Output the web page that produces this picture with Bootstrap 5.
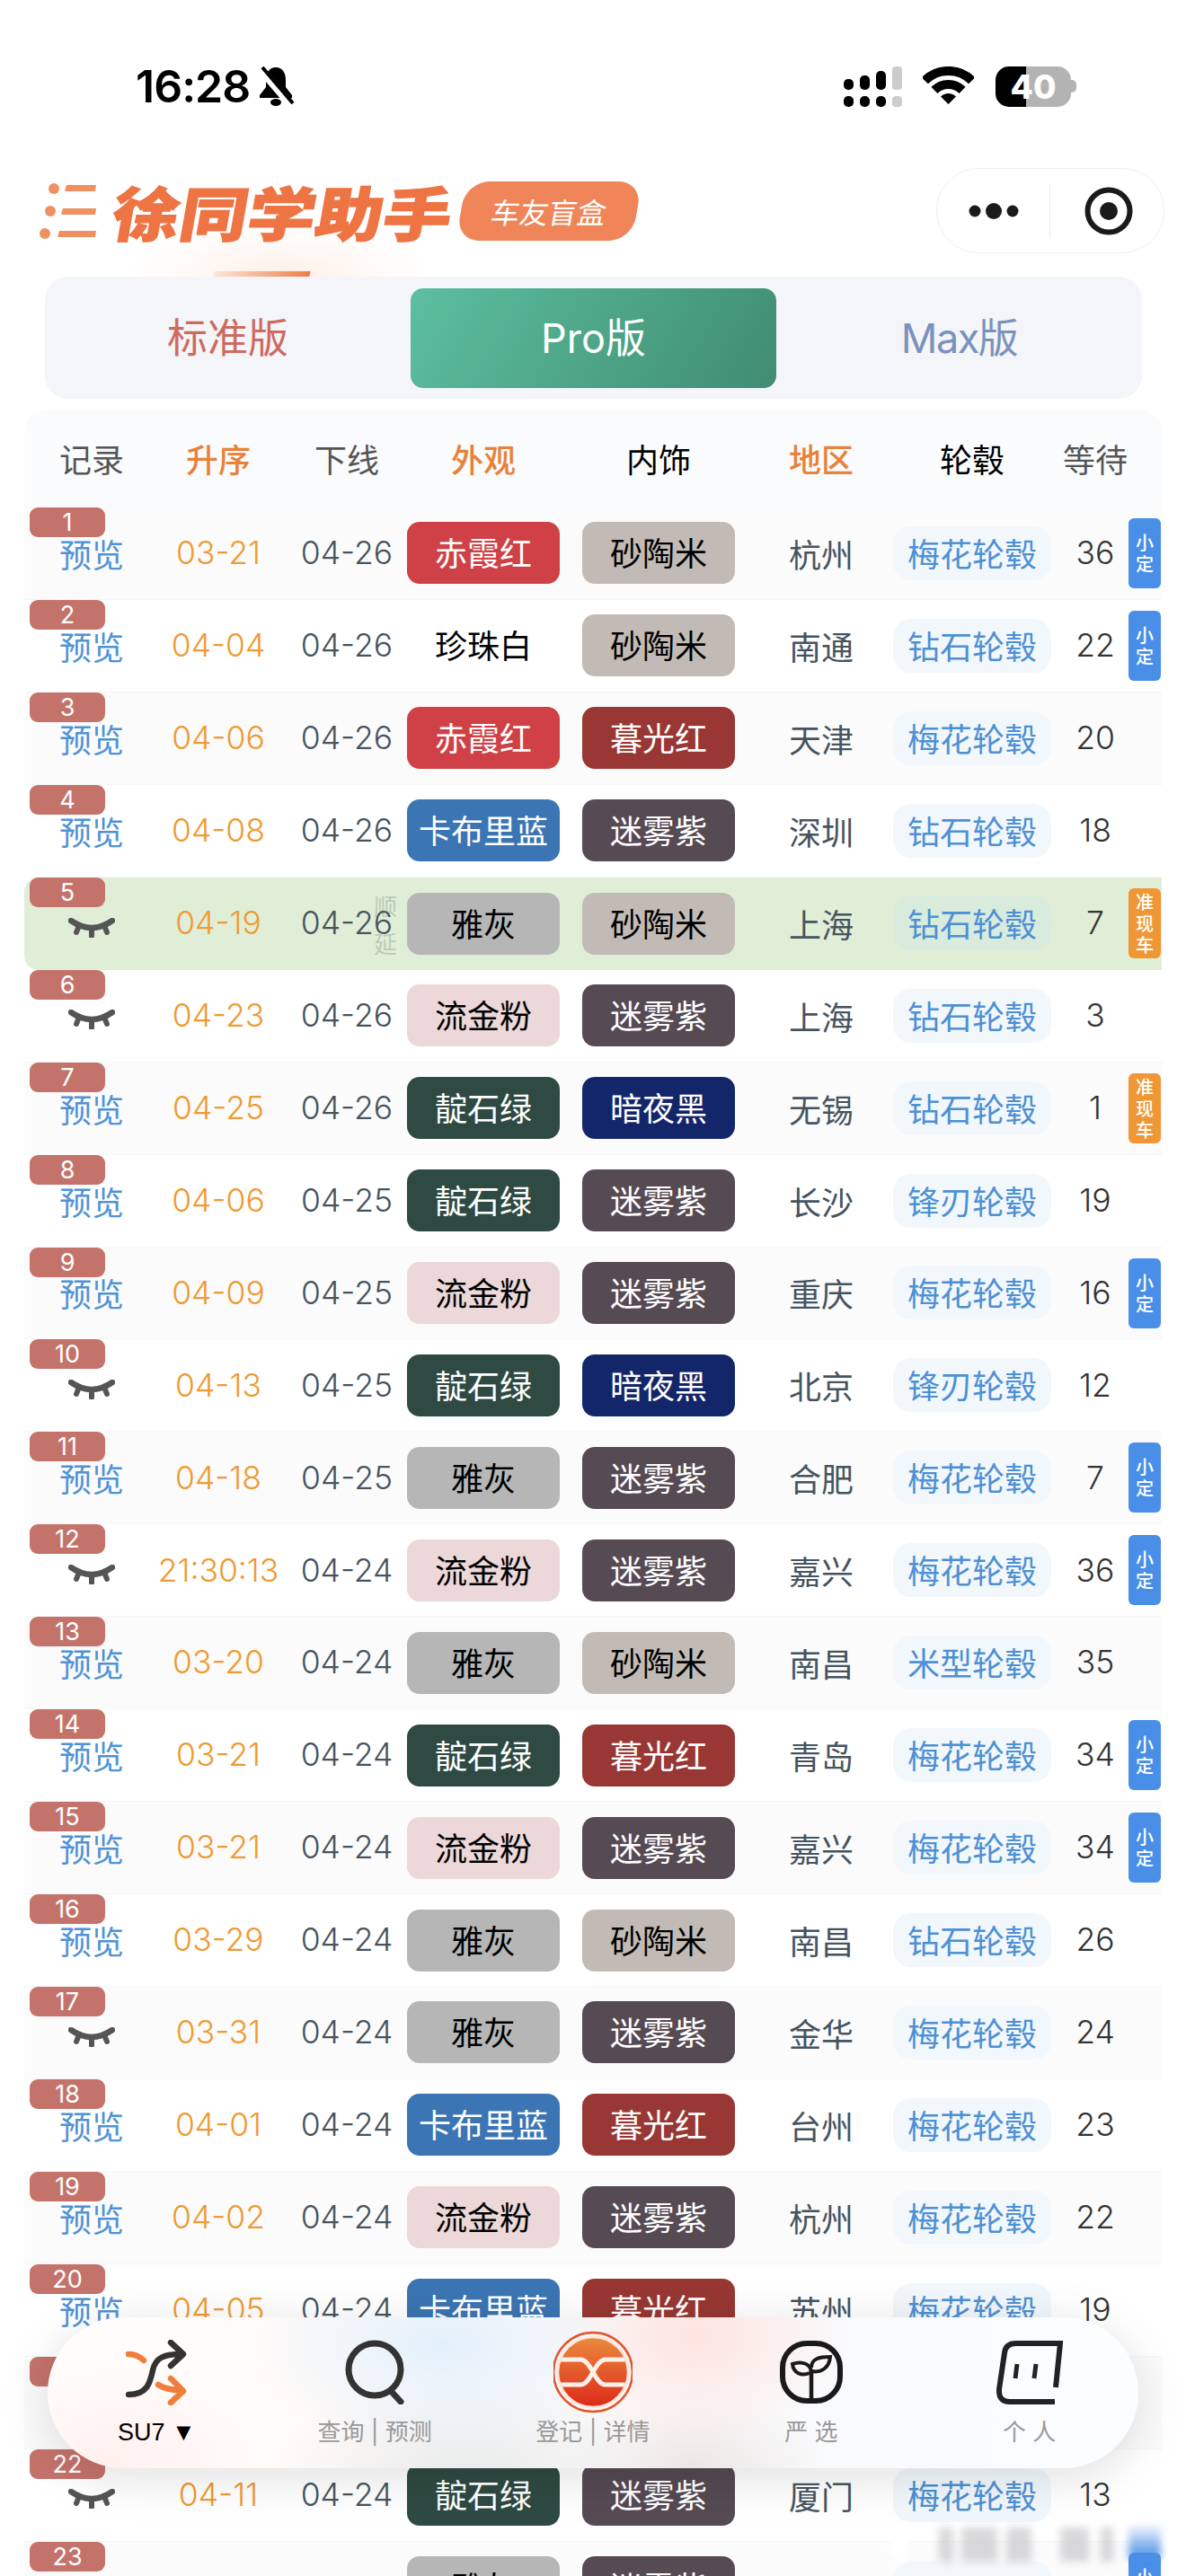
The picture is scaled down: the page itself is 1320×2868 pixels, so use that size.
<!doctype html>
<html lang="zh"><head><meta charset="utf-8"><title>徐同学助手</title>
<link href="https://cdn.jsdelivr.net/npm/bootstrap@5.3.0/dist/css/bootstrap.min.css" rel="stylesheet">
<style>
html,body{height:2868px;overflow:hidden;background:#fff}
body{font-family:Inter,"Noto Sans CJK SC",sans-serif;color:#333}
.phone{height:2868px;overflow:hidden}
.sbar{height:187px;padding:74px 122px 0 151px}
.clock{font-size:50px;font-weight:600;line-height:46px;color:#000;letter-spacing:-1px;margin-top:-1px}
.batt{width:84px;height:45px;border-radius:15px;background:linear-gradient(90deg,#000 41%,#b3b3b3 41%);color:#fff;font-size:37px;font-weight:800;line-height:45px;text-align:center}
.tip{width:6px;height:14px;margin-top:15px;border-radius:0 5px 5px 0;background:#b3b3b3}
.hrow{height:95px;padding:0 24px 0 44px}
.brand{font-family:"Noto Sans CJK SC",sans-serif;font-size:74px;font-weight:900;line-height:74px;color:#ee7444;transform:skewX(-10deg) scale(1.02,.88);margin-left:22px;-webkit-text-stroke:1.5px #ee7444;white-space:nowrap}
.boxtag{width:196px;height:66px;margin-left:13px;background:#ef8558;border-radius:26px;transform:skewX(-10deg);color:#fff;font-family:"Noto Sans CJK SC",sans-serif;font-size:32px;line-height:66px;text-align:center}
.glow{left:60px;top:190px;width:720px;height:118px;background:radial-gradient(ellipse 170px 60px at 250px 118px,#fdf0e7,rgba(255,255,255,0))}
.stripe{left:188px;top:-6px;width:107px;height:6px;background:linear-gradient(90deg,#fbe8dc,#ee7d48);transform:skewX(-14deg)}
.capsule{width:254px;height:95px;border:1px solid #f0f0f2;border-radius:47px;background:#fff}
.capsule>div{width:50%;height:60px}
.capsule>div:first-child{border-right:1px solid #ededef}
.capsule>div:last-child{padding-left:4px}
.tabsbar{height:136px;margin:26px 49px 13px 50px;background:#f4f5f8;border-radius:26px;font-size:45px;line-height:1}
.tabx{width:407px}
.tabon{height:111px;border-radius:14px;background:linear-gradient(120deg,#5cbf9f,#408c72);color:#fff}
.tabr{color:#cd6a60}.tabm{color:#7a92bd;letter-spacing:-1.5px}
.ttable{margin:0 27px;font-family:"Noto Sans CJK SC",sans-serif}
.thead,.trow{grid-template-columns:139px 154px 132px 172px 218px 144px 192px 82px 33px;text-align:center}
.thead{height:108px;background:#fafbfd;border-radius:24px 24px 0 0;font-size:36px;line-height:1;color:#555;align-content:center;padding-bottom:3px}
.thead>span:first-child,.trow>.vw{padding-left:11px}
.hot{color:#e8813a;font-weight:500}.blk{color:#000}
.trow{height:102.95px;border-bottom:1px solid #f6f6f8;background:#fff;font-size:36px;line-height:1}
.trow:nth-child(odd){background:#fbfbfc}
.trow.picked{background:#e0eed8;border-radius:16px 0 0 16px;border-bottom:0}
.rank{left:6px;top:0;width:84px;height:33px;border-radius:9px;background:#c4736b;color:#fff;font:27px/33px Inter,sans-serif;text-align:center;z-index:1}
.vw{color:#4f93d6}
.vw svg{margin-top:-3px}
.dt,.off,.num{font-family:Inter,sans-serif;font-size:35.5px;font-weight:350}
.dt{color:#ef9a32}.off{color:#46545f}.num{color:#333}
.city{color:#46545f}
.tone{width:170px;height:69px;border-radius:14px;line-height:67px;margin:0 auto}
.wheel{width:176px;height:60px;border-radius:20px;line-height:58px;margin:0 auto;background:#f2f7fc;color:#4d90d4}
.picked .wheel{background:#d9ebdc}
.t-red{background:#cf4146;color:#fff}.t-wht{background:#fff;color:#000}.t-blu{background:#3b75b3;color:#fff}
.t-gry{background:#b6b6b6;color:#000}.t-pnk{background:#ecd8d8;color:#000}.t-grn{background:#2f4a42;color:#fff}
.t-snd{background:#c2bbb5;color:#000}.t-dus{background:#983733;color:#fff}.t-pur{background:#564a53;color:#fff}.t-nit{background:#14266a;color:#fff}
.tag{right:1px;top:12px;width:36px;height:78px;border-radius:6px;color:#fff;font-size:20px;line-height:24px;font-weight:500;padding-top:3px;text-align:center}
.tag2{padding-top:15px;line-height:24px;background:#4a8fe7}
.tag3{background:#ef9735;padding-top:3px}
.shun{left:388px;top:10px;width:28px;font-size:26px;line-height:42px;color:rgba(90,110,90,.3)}
.dock{left:53px;top:2580px;width:1214px;height:168px;border-radius:84px;z-index:5;box-shadow:0 10px 55px rgba(0,0,0,.13);
background:radial-gradient(ellipse 170px 110px at 70px 160px,#fff0ee,transparent),radial-gradient(ellipse 220px 120px at 440px 30px,#e3f0fc,transparent),radial-gradient(ellipse 220px 110px at 470px 170px,#e9ebec,transparent),radial-gradient(ellipse 170px 120px at 720px 20px,#fde3df,transparent),radial-gradient(ellipse 150px 90px at 720px 170px,#ebe6e5,transparent),linear-gradient(90deg,#fffdfc,#fffaf7 25%,#f8fafd 80%,#fcfdfe)}
.ditem{width:20%}
.dicon{height:92px;margin-top:15px;margin-bottom:3px}
.dlabel{font-size:26px;line-height:36px;color:#999;white-space:nowrap}
.dsel{font:500 27px/36px "Liberation Sans",sans-serif;color:#000}
.mist{left:985px;top:2810px;width:320px;height:48px;z-index:6;filter:blur(4px)}
.mist>i{position:absolute;top:4px;height:38px;background:rgba(170,170,175,.45)}
.mist>i.w{left:6px;width:20px;background:#fff;border-radius:8px}
.mist>i.b{left:271px;width:36px;height:36px;top:2px;background:linear-gradient(180deg,rgba(74,143,231,.1),#4a8fe7)}
</style></head>
<body>
<div class="phone position-relative">
<div class="position-absolute glow"></div>
<div class="sbar d-flex align-items-start position-relative">
 <div class="clock">16:28</div>
 <svg class="ms-2" width="42" height="44" viewBox="0 0 42 44"><path d="M21 1c-8 0-11 7-11 14v8l-7 9v3h36v-3l-7-9v-8c0-7-3-14-11-14z" fill="#000"/><ellipse cx="21" cy="40" rx="6" ry="4" fill="#000"/><path d="M3 2l36 42" stroke="#fff" stroke-width="9"/><path d="M6 1l34 40" stroke="#000" stroke-width="4"/></svg>
 <svg class="ms-auto" width="65" height="45" viewBox="0 0 65 45"><g fill="#000"><rect y="14" width="11" height="12" rx="5"/><rect x="18" y="10" width="11" height="16" rx="5"/><rect x="36" y="5" width="11" height="21" rx="5"/><rect y="33" width="11" height="12" rx="5"/><rect x="18" y="33" width="11" height="12" rx="5"/><rect x="36" y="33" width="11" height="12" rx="5"/></g><g fill="#ccc"><rect x="54" width="11" height="26" rx="4"/><rect x="54" y="33" width="11" height="12" rx="4"/></g></svg>
 <svg style="margin-left:23px" width="57" height="42" viewBox="0 0 57 42"><path d="M2.3 15.8A37 37 0 0 1 54.7 15.8M12.9 26.4A22 22 0 0 1 44.1 26.4" fill="none" stroke="#000" stroke-width="10"/><path d="M28.5 42L20 33.5A12 12 0 0 1 37 33.5Z" fill="#000"/></svg>
 <div class="batt ms-4">40</div><div class="tip"></div>
</div>
<div class="hrow d-flex align-items-center position-relative">
 <svg width="64" height="62" viewBox="0 0 64 62" fill="#ef9060"><circle cx="16" cy="6" r="6"/><circle cx="12" cy="31" r="6"/><circle cx="6" cy="56" r="6"/><polygon points="30,2 63,2 62,9 28,9"/><polygon points="26,28 63,28 62,35 24,35"/><polygon points="22,53 63,53 62,60 20,60"/></svg>
 <div class="brand">徐同学助手</div>
 <div class="boxtag">车友盲盒</div>
 <div class="capsule d-flex align-items-center ms-auto">
  <div class="d-flex align-items-center justify-content-center"><svg width="56" height="20" viewBox="0 0 56 20" fill="#1a1a1a"><circle cx="7" cy="10" r="6.5"/><circle cx="28" cy="10" r="9"/><circle cx="49" cy="10" r="6.5"/></svg></div>
  <div class="d-flex align-items-center justify-content-center"><svg width="54" height="54" viewBox="0 0 54 54"><circle cx="27" cy="27" r="23.5" fill="none" stroke="#1a1a1a" stroke-width="6"/><circle cx="27" cy="27" r="10" fill="#1a1a1a"/></svg></div>
 </div>
</div>
<div class="tabsbar d-flex position-relative">
 <div class="position-absolute stripe"></div>
 <div class="tabx tabr d-flex align-items-center justify-content-center">标准版</div>
 <div class="tabx tabon d-flex align-items-center justify-content-center align-self-center">Pro版</div>
 <div class="tabx tabm d-flex align-items-center justify-content-center">Max版</div>
</div>
<svg class="d-none"><symbol id="eye" viewBox="0 0 52 22"><path d="M3 3Q26 19 49 3" fill="none" stroke="#555" stroke-width="6.5" stroke-linecap="round"/><path d="M11 11L9 16M26 14V20M41 11L43 16" stroke="#555" stroke-width="6" stroke-linecap="round"/></symbol></svg>
<div class="ttable">
 <div class="thead d-grid align-items-center"><span>记录</span><span class="hot">升序</span><span>下线</span><span class="hot">外观</span><span class="blk">内饰</span><span class="hot">地区</span><span class="blk">轮毂</span><span>等待</span></div>
 <div>
 <div class="trow d-grid align-items-center position-relative"><span class="rank position-absolute">1</span><span class="vw">预览</span><span class="dt">03-21</span><span class="off">04-26</span><span class="tone t-red">赤霞红</span><span class="tone t-snd">砂陶米</span><span class="city">杭州</span><span class="wheel">梅花轮毂</span><span class="num">36</span><span class="tag tag2 position-absolute">小定</span></div>
 <div class="trow d-grid align-items-center position-relative"><span class="rank position-absolute">2</span><span class="vw">预览</span><span class="dt">04-04</span><span class="off">04-26</span><span class="tone t-wht">珍珠白</span><span class="tone t-snd">砂陶米</span><span class="city">南通</span><span class="wheel">钻石轮毂</span><span class="num">22</span><span class="tag tag2 position-absolute">小定</span></div>
 <div class="trow d-grid align-items-center position-relative"><span class="rank position-absolute">3</span><span class="vw">预览</span><span class="dt">04-06</span><span class="off">04-26</span><span class="tone t-red">赤霞红</span><span class="tone t-dus">暮光红</span><span class="city">天津</span><span class="wheel">梅花轮毂</span><span class="num">20</span></div>
 <div class="trow d-grid align-items-center position-relative"><span class="rank position-absolute">4</span><span class="vw">预览</span><span class="dt">04-08</span><span class="off">04-26</span><span class="tone t-blu">卡布里蓝</span><span class="tone t-pur">迷雾紫</span><span class="city">深圳</span><span class="wheel">钻石轮毂</span><span class="num">18</span></div>
 <div class="trow picked d-grid align-items-center position-relative"><span class="rank position-absolute">5</span><span class="vw"><svg width="52" height="22"><use href="#eye"/></svg></span><span class="dt">04-19</span><span class="off">04-26</span><span class="tone t-gry">雅灰</span><span class="tone t-snd">砂陶米</span><span class="city">上海</span><span class="wheel">钻石轮毂</span><span class="num">7</span><span class="shun position-absolute">顺延</span><span class="tag tag3 position-absolute">准现车</span></div>
 <div class="trow d-grid align-items-center position-relative"><span class="rank position-absolute">6</span><span class="vw"><svg width="52" height="22"><use href="#eye"/></svg></span><span class="dt">04-23</span><span class="off">04-26</span><span class="tone t-pnk">流金粉</span><span class="tone t-pur">迷雾紫</span><span class="city">上海</span><span class="wheel">钻石轮毂</span><span class="num">3</span></div>
 <div class="trow d-grid align-items-center position-relative"><span class="rank position-absolute">7</span><span class="vw">预览</span><span class="dt">04-25</span><span class="off">04-26</span><span class="tone t-grn">靛石绿</span><span class="tone t-nit">暗夜黑</span><span class="city">无锡</span><span class="wheel">钻石轮毂</span><span class="num">1</span><span class="tag tag3 position-absolute">准现车</span></div>
 <div class="trow d-grid align-items-center position-relative"><span class="rank position-absolute">8</span><span class="vw">预览</span><span class="dt">04-06</span><span class="off">04-25</span><span class="tone t-grn">靛石绿</span><span class="tone t-pur">迷雾紫</span><span class="city">长沙</span><span class="wheel">锋刃轮毂</span><span class="num">19</span></div>
 <div class="trow d-grid align-items-center position-relative"><span class="rank position-absolute">9</span><span class="vw">预览</span><span class="dt">04-09</span><span class="off">04-25</span><span class="tone t-pnk">流金粉</span><span class="tone t-pur">迷雾紫</span><span class="city">重庆</span><span class="wheel">梅花轮毂</span><span class="num">16</span><span class="tag tag2 position-absolute">小定</span></div>
 <div class="trow d-grid align-items-center position-relative"><span class="rank position-absolute">10</span><span class="vw"><svg width="52" height="22"><use href="#eye"/></svg></span><span class="dt">04-13</span><span class="off">04-25</span><span class="tone t-grn">靛石绿</span><span class="tone t-nit">暗夜黑</span><span class="city">北京</span><span class="wheel">锋刃轮毂</span><span class="num">12</span></div>
 <div class="trow d-grid align-items-center position-relative"><span class="rank position-absolute">11</span><span class="vw">预览</span><span class="dt">04-18</span><span class="off">04-25</span><span class="tone t-gry">雅灰</span><span class="tone t-pur">迷雾紫</span><span class="city">合肥</span><span class="wheel">梅花轮毂</span><span class="num">7</span><span class="tag tag2 position-absolute">小定</span></div>
 <div class="trow d-grid align-items-center position-relative"><span class="rank position-absolute">12</span><span class="vw"><svg width="52" height="22"><use href="#eye"/></svg></span><span class="dt">21:30:13</span><span class="off">04-24</span><span class="tone t-pnk">流金粉</span><span class="tone t-pur">迷雾紫</span><span class="city">嘉兴</span><span class="wheel">梅花轮毂</span><span class="num">36</span><span class="tag tag2 position-absolute">小定</span></div>
 <div class="trow d-grid align-items-center position-relative"><span class="rank position-absolute">13</span><span class="vw">预览</span><span class="dt">03-20</span><span class="off">04-24</span><span class="tone t-gry">雅灰</span><span class="tone t-snd">砂陶米</span><span class="city">南昌</span><span class="wheel">米型轮毂</span><span class="num">35</span></div>
 <div class="trow d-grid align-items-center position-relative"><span class="rank position-absolute">14</span><span class="vw">预览</span><span class="dt">03-21</span><span class="off">04-24</span><span class="tone t-grn">靛石绿</span><span class="tone t-dus">暮光红</span><span class="city">青岛</span><span class="wheel">梅花轮毂</span><span class="num">34</span><span class="tag tag2 position-absolute">小定</span></div>
 <div class="trow d-grid align-items-center position-relative"><span class="rank position-absolute">15</span><span class="vw">预览</span><span class="dt">03-21</span><span class="off">04-24</span><span class="tone t-pnk">流金粉</span><span class="tone t-pur">迷雾紫</span><span class="city">嘉兴</span><span class="wheel">梅花轮毂</span><span class="num">34</span><span class="tag tag2 position-absolute">小定</span></div>
 <div class="trow d-grid align-items-center position-relative"><span class="rank position-absolute">16</span><span class="vw">预览</span><span class="dt">03-29</span><span class="off">04-24</span><span class="tone t-gry">雅灰</span><span class="tone t-snd">砂陶米</span><span class="city">南昌</span><span class="wheel">钻石轮毂</span><span class="num">26</span></div>
 <div class="trow d-grid align-items-center position-relative"><span class="rank position-absolute">17</span><span class="vw"><svg width="52" height="22"><use href="#eye"/></svg></span><span class="dt">03-31</span><span class="off">04-24</span><span class="tone t-gry">雅灰</span><span class="tone t-pur">迷雾紫</span><span class="city">金华</span><span class="wheel">梅花轮毂</span><span class="num">24</span></div>
 <div class="trow d-grid align-items-center position-relative"><span class="rank position-absolute">18</span><span class="vw">预览</span><span class="dt">04-01</span><span class="off">04-24</span><span class="tone t-blu">卡布里蓝</span><span class="tone t-dus">暮光红</span><span class="city">台州</span><span class="wheel">梅花轮毂</span><span class="num">23</span></div>
 <div class="trow d-grid align-items-center position-relative"><span class="rank position-absolute">19</span><span class="vw">预览</span><span class="dt">04-02</span><span class="off">04-24</span><span class="tone t-pnk">流金粉</span><span class="tone t-pur">迷雾紫</span><span class="city">杭州</span><span class="wheel">梅花轮毂</span><span class="num">22</span></div>
 <div class="trow d-grid align-items-center position-relative"><span class="rank position-absolute">20</span><span class="vw">预览</span><span class="dt">04-05</span><span class="off">04-24</span><span class="tone t-blu">卡布里蓝</span><span class="tone t-dus">暮光红</span><span class="city">苏州</span><span class="wheel">梅花轮毂</span><span class="num">19</span></div>
 <div class="trow d-grid align-items-center position-relative"><span class="rank position-absolute">21</span></div>
 <div class="trow d-grid align-items-center position-relative"><span class="rank position-absolute">22</span><span class="vw"><svg width="52" height="22"><use href="#eye"/></svg></span><span class="dt">04-11</span><span class="off">04-24</span><span class="tone t-grn">靛石绿</span><span class="tone t-pur">迷雾紫</span><span class="city">厦门</span><span class="wheel">梅花轮毂</span><span class="num">13</span></div>
 <div class="trow d-grid align-items-center position-relative"><span class="rank position-absolute">23</span><span class="vw"></span><span class="dt"></span><span class="off"></span><span class="tone t-gry">雅灰</span><span class="tone t-pur">迷雾紫</span><span class="city"></span><span class="wheel"></span><span class="num"></span><span class="tag tag2 position-absolute">小定</span></div>
 </div>
</div>
<nav class="dock position-absolute d-flex">
 <div class="ditem text-center">
  <div class="dicon d-flex align-items-center justify-content-center"><svg width="68" height="73" viewBox="0 0 68 73" fill="none" stroke-width="6.5" stroke-linecap="round" stroke-linejoin="round"><path d="M3 61C24 61 27 48 30 34C33 20 42 16 62 16M50 3L64 16L50 29" stroke="#333"/><path d="M3 16C10 16 15 18 20 23M36 50C42 54 50 56 62 56M50 43L64 57L50 70" stroke="#ef7d3c"/></svg></div>
  <div class="dsel">SU7 ▼</div>
 </div>
 <div class="ditem text-center">
  <div class="dicon d-flex align-items-center justify-content-center"><svg width="68" height="72" viewBox="0 0 68 72" fill="none" stroke="#333" stroke-width="7" stroke-linecap="round"><circle cx="34" cy="33" r="29"/><path d="M52 57L63 69"/></svg></div>
  <div class="dlabel">查询 | 预测</div>
 </div>
 <div class="ditem text-center">
  <div class="dicon d-flex align-items-center justify-content-center"><svg width="88" height="92" viewBox="0 0 88 92"><defs><linearGradient id="lg" x1="0" y1="0" x2="0" y2="1"><stop offset="0" stop-color="#ec8a3e"/><stop offset="1" stop-color="#dc2a1a"/></linearGradient><clipPath id="lc"><circle cx="44" cy="46" r="38"/></clipPath></defs><circle cx="44" cy="46" r="44" fill="none" stroke="#e0562c" stroke-width="2.5"/><circle cx="44" cy="46" r="39" fill="url(#lg)" stroke="#fbe6da" stroke-width="2.5"/><g clip-path="url(#lc)" fill="none" stroke="#fdf0e8" stroke-width="5"><path d="M0 32H30C42 32 46 60 58 60H88"/><path d="M88 32H58C46 32 42 60 30 60H0"/></g></svg></div>
  <div class="dlabel">登记 | 详情</div>
 </div>
 <div class="ditem text-center">
  <div class="dicon d-flex align-items-center justify-content-center"><svg width="70" height="70" viewBox="0 0 70 70" fill="none" stroke="#1a1a1a"><rect x="3" y="3" width="64" height="64" rx="27" stroke-width="6"/><path d="M35 66V32" stroke-width="4.5"/><path d="M35 36C35 26 25 22 14 26C15 36 24 40 33 36M35 30C35 20 44 18 56 18C55 30 46 36 36 34" stroke-width="4"/></svg></div>
  <div class="dlabel">严 选</div>
 </div>
 <div class="ditem text-center">
  <div class="dicon d-flex align-items-center justify-content-center"><svg width="74" height="71" viewBox="0 0 74 71" fill="none" stroke="#222"><path d="M66 52L71 3H22Q10 3 9 14L3 54Q2 68 15 68H65" stroke-width="6"/><path d="M23 26L21 42M44 26L42 42" stroke-width="5"/></svg></div>
  <div class="dlabel">个 人</div>
 </div>
</nav>
<div class="mist position-absolute"><i class="w"></i><i style="left:60px;width:16px"></i><i style="left:85px;width:40px"></i><i style="left:135px;width:28px"></i><i style="left:195px;width:32px"></i><i style="left:240px;width:14px"></i><i class="b"></i></div>
</div>
<script src="https://cdn.jsdelivr.net/npm/bootstrap@5.3.0/dist/js/bootstrap.bundle.min.js"></script>
</body></html>
